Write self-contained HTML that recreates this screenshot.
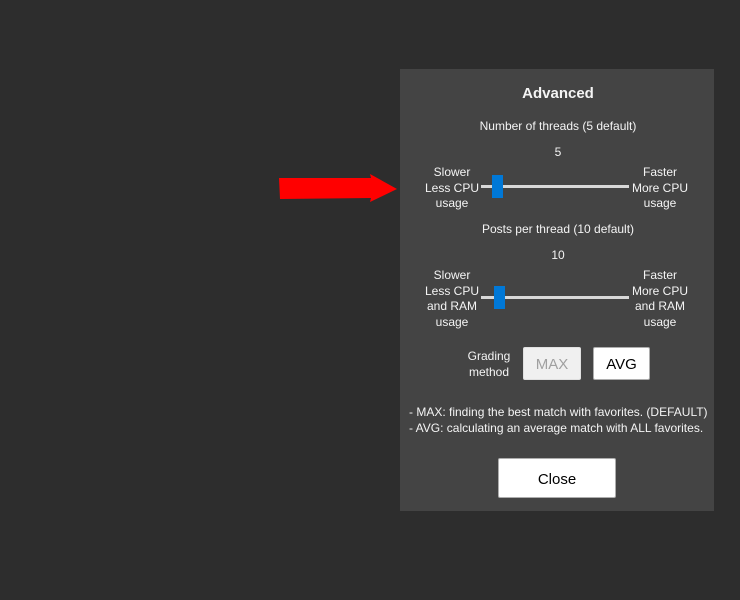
<!DOCTYPE html>
<html><head><style>
body{margin:0;width:740px;height:600px;background:#2d2d2d;position:relative;overflow:hidden;font-family:"Liberation Sans",sans-serif;color:#f4f4f4;font-size:12px}
.p{position:absolute;left:400px;top:69px;width:314px;height:442px;background:#444}
.t{position:absolute;text-align:center;line-height:15.5px;white-space:nowrap}
.trk{position:absolute;height:3px;background:#d8d8d8}
.th{position:absolute;width:11px;height:23px;background:#0078d7}
.b{position:absolute;box-sizing:border-box;text-align:center;border:1px solid #adadad;border-radius:2px;background:#fff;color:#000;font-size:15px}
</style></head><body>
<svg style="position:absolute;left:0;top:0" width="400" height="600"><polygon points="279,178 371,178 370,174 397,189 370,202 371,198 280,199" fill="#f00"/></svg>
<div class="p"></div>
<div class="t" style="left:400px;width:316px;top:86px;font-size:15px;font-weight:bold">Advanced</div>
<div class="t" style="left:400px;width:316px;top:119px">Number of threads (5 default)</div>
<div class="t" style="left:400px;width:316px;top:145px">5</div>
<div class="t" style="left:422px;width:60px;top:165px">Slower<br>Less CPU<br>usage</div>
<div class="t" style="left:630px;width:60px;top:165px">Faster<br>More CPU<br>usage</div>
<div class="trk" style="left:481px;width:148px;top:185px"></div>
<div class="th" style="left:492px;top:175px"></div>
<div class="t" style="left:400px;width:316px;top:222px">Posts per thread (10 default)</div>
<div class="t" style="left:400px;width:316px;top:248px">10</div>
<div class="t" style="left:422px;width:60px;top:268px">Slower<br>Less CPU<br>and RAM<br>usage</div>
<div class="t" style="left:630px;width:60px;top:268px">Faster<br>More CPU<br>and RAM<br>usage</div>
<div class="trk" style="left:481px;width:148px;top:296px"></div>
<div class="th" style="left:494px;top:286px"></div>
<div class="t" style="left:459px;width:60px;top:349px">Grading<br>method</div>
<div class="b" style="left:523px;top:347px;width:58px;height:33px;line-height:33px;background:#f0f0f0;border-color:#e0e0e0;color:#a0a0a0">MAX</div>
<div class="b" style="left:593px;top:347px;width:57px;height:33px;line-height:33px">AVG</div>
<div class="t" style="left:409px;top:405px;text-align:left">- MAX: finding the best match with favorites. (DEFAULT)<br>- AVG: calculating an average match with ALL favorites.</div>
<div class="b" style="left:498px;top:458px;width:118px;height:40px;line-height:41px">Close</div>
</body></html>
